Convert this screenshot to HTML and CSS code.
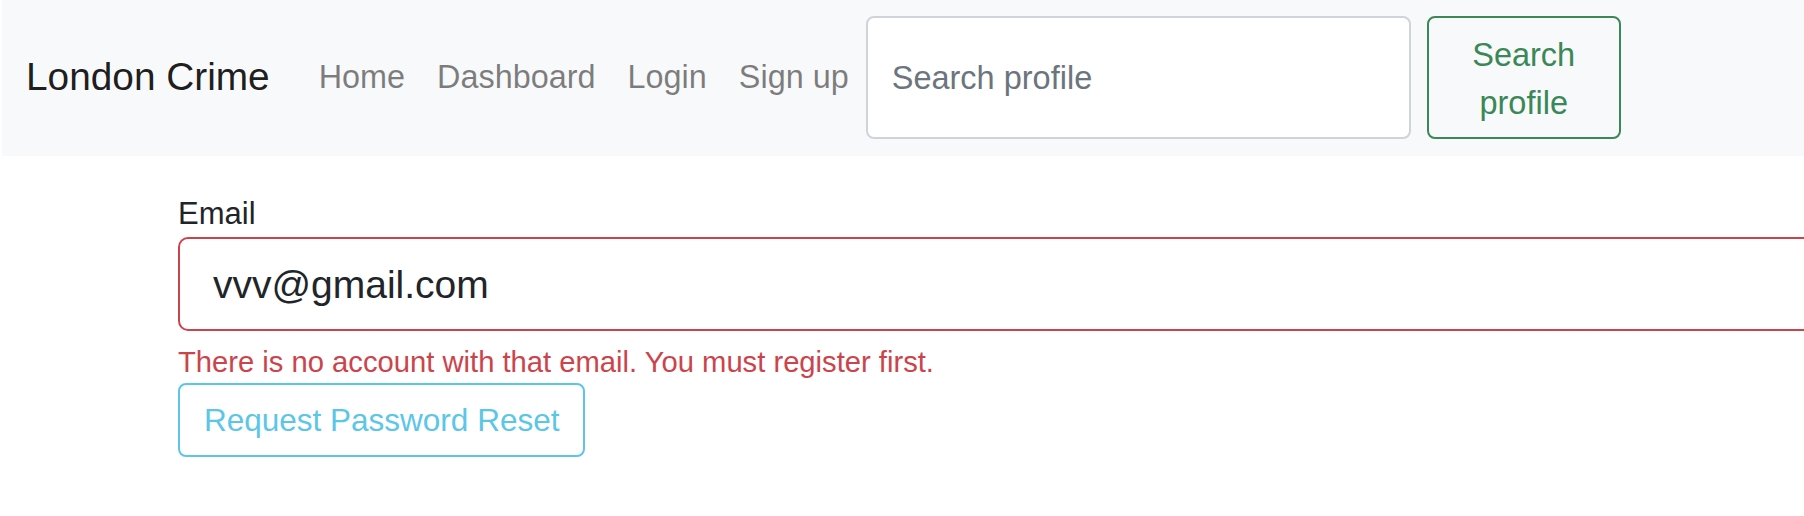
FILE: index.html
```html
<!DOCTYPE html>
<html lang="en">
<head>
<meta charset="utf-8">
<title>London Crime - Reset Password</title>
<link rel="stylesheet" href="styles.css">
</head>
<body>
<nav class="navbar">
  <a class="brand" href="#">London Crime</a>
  <ul class="nav">
    <li><a class="nav-link" href="#">Home</a></li>
    <li><a class="nav-link" href="#">Dashboard</a></li>
    <li><a class="nav-link" href="#">Login</a></li>
    <li><a class="nav-link" href="#">Sign up</a></li>
  </ul>
  <form class="search">
    <input class="search-input" type="search" placeholder="Search profile">
    <button class="search-btn" type="button">Search profile</button>
  </form>
</nav>
<main class="content">
  <form class="reset">
    <label class="label" for="email">Email</label>
    <input class="email" id="email" type="text" value="vvv@gmail.com">
    <div class="feedback">There is no account with that email. You must register first.</div>
    <button class="reset-btn" type="button">Request Password Reset</button>
  </form>
</main>
</body>
</html>
```
FILE: styles.css
```css
html, body {
  margin: 0;
  padding: 0;
  overflow: hidden;
  background: #ffffff;
  font-family: "Liberation Sans", Arial, sans-serif;
}

.navbar {
  margin-left: 2px;
  height: 156px;
  box-sizing: border-box;
  padding: 16px 0 17px 24px;
  background: #f8f9fa;
  display: flex;
  align-items: center;
}

.brand {
  font-size: 38.8px;
  line-height: 1.5;
  color: rgba(0, 0, 0, 0.9);
  text-decoration: none;
  margin-right: 33px;
  white-space: nowrap;
}

.nav {
  display: flex;
  list-style: none;
  margin: 0;
  padding: 0;
}

.nav-link {
  display: block;
  padding: 0 16px;
  font-size: 32.4px;
  line-height: 1.5;
  color: rgba(0, 0, 0, 0.5);
  text-decoration: none;
  white-space: nowrap;
}

.search {
  display: flex;
  align-items: stretch;
  margin: 0 0 0 1px;
}

.search-input {
  width: 545px;
  box-sizing: border-box;
  border: 2px solid #ced4da;
  border-radius: 8px;
  padding: 2px 24px 0;
  font-family: inherit;
  font-size: 32.5px;
  color: #495057;
  background: #ffffff;
  outline: none;
  -webkit-appearance: none;
}

.search-input::placeholder {
  color: #6c757d;
  opacity: 1;
}

.search-btn {
  margin-left: 16px;
  width: 194px;
  box-sizing: border-box;
  border: 2px solid #3a8757;
  border-radius: 8px;
  background: transparent;
  color: #3a8757;
  padding: 14px 24px 10px;
  font-family: inherit;
  font-size: 32.5px;
  line-height: 47.5px;
  text-align: center;
}

.content {
  padding: 35px 0 0 178px;
}

.reset {
  width: 1700px;
}

.label {
  display: block;
  font-size: 31px;
  line-height: 46px;
  color: #212529;
}

.email {
  display: block;
  width: 100%;
  height: 94px;
  box-sizing: border-box;
  border: 2px solid #cc444b;
  border-radius: 10px;
  padding: 2px 33px 0;
  font-family: inherit;
  font-size: 39px;
  color: #212529;
  background: #ffffff;
  outline: none;
}

.feedback {
  margin-top: 10px;
  font-size: 29.2px;
  line-height: 42px;
  color: #cc444b;
}

.reset-btn {
  display: block;
  height: 74px;
  box-sizing: border-box;
  border: 2px solid #5bc6e8;
  border-radius: 8px;
  background: transparent;
  color: #5bc6e8;
  padding: 0 24px;
  font-family: inherit;
  font-size: 31.5px;
}
```
